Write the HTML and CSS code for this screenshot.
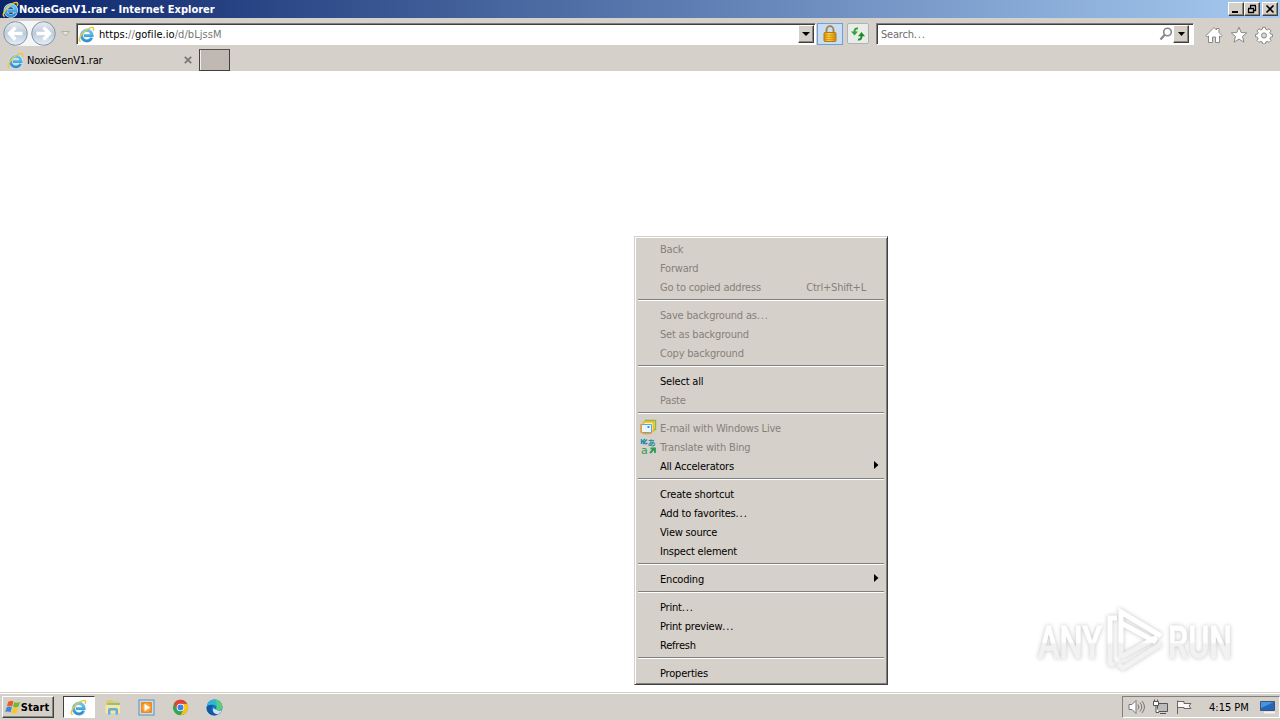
FILE: index.html
```
<!DOCTYPE html>
<html lang="en">
<head>
    <meta charset="UTF-8">
    <meta name="viewport" content="width=device-width, initial-scale=1.0">
    <title>NoxieGenV1.rar - Internet Explorer</title>
    <link rel="stylesheet" href="styles.css">
</head>
<body>
    <svg class="defs" width="0" height="0">
        <defs>
            <linearGradient id="ieBlue" x1="0" y1="0" x2="0" y2="1">
                <stop offset="0" stop-color="#64c5ef"/>
                <stop offset="1" stop-color="#2d8fd0"/>
            </linearGradient>
            <linearGradient id="silver" x1="0" y1="0" x2="0" y2="1">
                <stop offset="0" stop-color="#e9edf2"/>
                <stop offset=".5" stop-color="#bccbdc"/>
                <stop offset="1" stop-color="#e6f0fa"/>
            </linearGradient>
            <linearGradient id="gold" x1="0" y1="0" x2="1" y2="0">
                <stop offset="0" stop-color="#d98e08"/>
                <stop offset=".4" stop-color="#ffd543"/>
                <stop offset="1" stop-color="#d28a0c"/>
            </linearGradient>
            <linearGradient id="wmFade" gradientUnits="userSpaceOnUse" x1="0" y1="0" x2="0" y2="70">
                <stop offset=".5" stop-color="#fff"/>
                <stop offset=".53" stop-color="#f1f1f1"/>
                <stop offset="1" stop-color="#f3f3f3"/>
            </linearGradient>
        </defs>
        <symbol id="ie" viewBox="0 0 16 16">
            <path d="M12.900 11A5 5 0 1 1 13.300 9H5.500" fill="none" stroke="#d9effb" stroke-width="3.600"/>
            <path d="M12.900 11A5 5 0 1 1 13.300 9H5.500" fill="none" stroke="url(#ieBlue)" stroke-width="2.600"/>
            <path d="M2.600 14.500C0 14.600 1.300 9.800 5.200 5.800 9.200 1.900 14.300 0 14.700 2.600c.1.800-.1 1.400-.5 2" fill="none" stroke="#efc63c" stroke-width="1.400"/>
        </symbol>
    </svg>

    <div class="titlebar">
        <svg class="ie-icon" width="17" height="17"><use href="#ie"/></svg>
        <span class="title">NoxieGenV1.rar - Internet Explorer</span>
        <div class="win-buttons">
            <button class="win-btn"><svg width="12" height="10"><path d="M2 8h6" stroke="#000" stroke-width="2"/></svg></button>
            <button class="win-btn"><svg width="12" height="10"><path d="M4 1.500h6M4.500 2v2M9.500 2v4.500H8M2 4.500h6M2.500 5v3.500h5V5" fill="none" stroke="#000" stroke-width="1.300"/></svg></button>
            <button class="win-btn close"><svg width="12" height="10"><path d="M2.500 1.500l7 7M9.500 1.500l-7 7" stroke="#000" stroke-width="1.600"/></svg></button>
        </div>
    </div>

    <div class="navbar">
        <svg class="history" width="74" height="30" viewBox="0 0 74 30">
            <path d="M15 3h28a13 13 0 0 1 0 25H15z" fill="#f5f6f7"/>
            <g fill="url(#silver)" stroke="#8794a3">
                <circle cx="15.500" cy="15.500" r="11.800"/>
                <circle cx="43.500" cy="15.500" r="11.800"/>
            </g>
            <g fill="none" stroke="#fff" stroke-width="3.400">
                <path d="M22.500 15.500H10M15.500 9.500l-6 6 6 6"/>
                <path d="M36.500 15.500h12M43.500 9.500l6 6-6 6"/>
            </g>
            <path d="M61.500 13.500h8l-4 4.500z" fill="#e5e1dc" stroke="#b3aea7"/>
        </svg>
        <div class="field address">
            <svg class="ie-icon" width="17" height="17"><use href="#ie"/></svg>
            <span class="url">https:<i>//</i>gofile.io<i>/d/bLjssM</i></span>
            <button class="drop"><svg width="8" height="4"><path d="M0 0h8L4 4z"/></svg></button>
        </div>
        <button class="lock">
            <svg width="16" height="18" viewBox="0 0 16 18">
                <path d="M4.500 8V5a3.500 3.800 0 0 1 7 0v3" fill="none" stroke="#a48338" stroke-width="1.800"/>
                <rect x="2" y="7.500" width="12" height="9" rx="1" fill="url(#gold)" stroke="#b87a0d"/>
                <path d="M2.500 10h11M2.500 12.300h11M2.500 14.600h11" stroke="#c5860c" stroke-width=".7"/>
            </svg>
        </button>
        <button class="reload">
            <svg width="16" height="16" viewBox="0 0 16 16">
                <path d="M8 2.500C5.500 2 4.500 3.500 4.500 6" fill="none" stroke="#31a535" stroke-width="2"/>
                <path d="M1 5.500h7L4.500 9.500z" fill="#31a535"/>
                <path d="M8 13.500c2.500.5 3.500-1 3.500-3.500" fill="none" stroke="#21882a" stroke-width="2"/>
                <path d="M8 10.200h7L11.500 6z" fill="#21882a"/>
            </svg>
        </button>
        <div class="field search">
            <span class="placeholder">Search<b class="dots">...</b></span>
            <svg width="14" height="14" viewBox="0 0 14 14"><circle cx="8.500" cy="5" r="3.800" fill="none" stroke="#85878b" stroke-width="1.600"/><path d="M5.500 8L1.500 12.500" stroke="#85878b" stroke-width="2.200"/></svg>
            <button class="drop"><svg width="7" height="4"><path d="M0 0h7L3.500 4z"/></svg></button>
        </div>
        <div class="tools">
            <svg width="18" height="18" viewBox="0 0 18 18"><path d="M1 9.500L9 1.500l2.500 2.500V2.500h2.500V6.500l3 3-1.200 1.500-1.300-1V16.500h-4V11h-3v5.500h-4V10l-1.300 1z" fill="#fff" stroke="#898989"/></svg>
            <svg width="18" height="18" viewBox="0 0 18 18"><path d="M9 1.200l2.200 5.300 5.600.3-4.300 3.700 1.500 5.700L9 13.100l-5 3.100 1.500-5.700L1.200 6.800l5.600-.3z" fill="#fff" stroke="#898989"/></svg>
            <svg width="18" height="18" viewBox="0 0 18 18"><path d="M7.600 1.300h2.800l.4 2 1.500.6 1.700-1.100 2 2-1.100 1.700.6 1.500 2 .4v2.400l-2 .4-.6 1.500 1.100 1.700-2 2-1.700-1.100-1.500.6-.4 2H7.600l-.4-2-1.500-.6L4 16.400l-2-2 1.100-1.700-.6-1.500-2-.4V8.400l2-.4.6-1.500L2 4.800l2-2 1.700 1.100 1.500-.6z" fill="#fff" stroke="#898989"/><circle cx="9" cy="9.500" r="2.600" fill="#d8d4cf" stroke="#898989"/></svg>
        </div>
    </div>

    <div class="tabs">
        <div class="tab active">
            <svg class="ie-icon" width="17" height="17"><use href="#ie"/></svg>
            <span class="tab-name">NoxieGenV1.rar</span>
            <svg class="tab-close" width="8" height="8"><path d="M.8.8l6.400 6.400M7.200.8L.8 7.200" stroke="#7c7873" stroke-width="1.800"/></svg>
        </div>
        <button class="new-tab"></button>
    </div>

    <div class="page"></div>

    <div class="taskbar">
        <button class="start">
            <svg width="16" height="16" viewBox="0 0 17 16">
                <path d="M3.500 2.500q3-2 5.500-.3L7.600 7.500Q5 5.800 2 7.300z" fill="#ed5a24"/>
                <path d="M10 2.600q2.800 1.600 6-.2L14.500 7.600q-3 1.600-6 .2z" fill="#76b82f"/>
                <path d="M1.800 8.200q3-1.500 5.500.2L5.800 13.800Q3.500 12 .3 13.400z" fill="#3c88d8"/>
                <path d="M8.200 8.800q3 1.500 6-.1l-1.500 5.400q-3 1.600-6 .1z" fill="#fbc52c"/>
            </svg>
            <span>Start</span>
        </button>
        <div class="task active"><svg width="17" height="17"><use href="#ie"/></svg></div>
        <div class="task">
            <svg width="18" height="18" viewBox="0 0 18 18">
                <path d="M2 3.500L4 2h4l1 1.500h6V15H2z" fill="#e9c75f"/>
                <path d="M3.500 5h12.500v3H3.500z" fill="#7fc69c"/>
                <path d="M1.500 7h14.500v8.500H1.500z" fill="#f8e6a0"/>
                <path d="M4 16.500V12q0-2 2-2h6q2 0 2 2v4.500h-2.500V12.500h-5v4z" fill="#67add9"/>
            </svg>
        </div>
        <div class="task">
            <svg width="17" height="17" viewBox="0 0 17 17">
                <rect x="1" y="1" width="15" height="15" fill="#c6dff1" stroke="#5792c0"/>
                <rect x="3" y="3" width="11" height="11" rx="1" fill="#f38a16"/>
                <circle cx="8.500" cy="8.500" r="4.500" fill="#f8a644"/>
                <path d="M6.500 4.800v7.400l5.500-3.700z" fill="#fff"/>
            </svg>
        </div>
        <div class="task">
            <svg width="17" height="17" viewBox="0 0 16 16">
                <circle cx="8" cy="8" r="7.200" fill="#35a553"/>
                <path d="M8 15.200A7.200 7.200 0 0 0 14.240 4.400H8l3.100 5.400z" fill="#fbc116"/>
                <path d="M1.760 4.400A7.200 7.200 0 0 1 14.240 4.400H8L4.900 9.800z" fill="#e34133"/>
                <circle cx="8" cy="8" r="3.600" fill="#fff"/>
                <circle cx="8" cy="8" r="2.800" fill="#3f7fe8"/>
            </svg>
        </div>
        <div class="task">
            <svg width="17" height="17" viewBox="0 0 16 16">
                <circle cx="8" cy="8" r="7.500" fill="#1478c8"/>
                <path d="M.6 7.500C1.500-1.500 15-2 15.500 7.500c0 3-3.500 4-6 2.500 1-1.500.5-4-2-4.500-3-.6-6 .2-6.900 2z" fill="#35b5d5"/>
                <path d="M9 .6c4 .4 6.500 3.500 6.500 6.900 0 3-3.500 4-6 2.500 1.500-3 .5-6.500-.5-9.400z" fill="#5bcd76"/>
                <path d="M9.500 10c2 1.500 4.500 1 5.500 0-.6 2.500-2.600 4-4.500 4.500-3-.5-4.700-3-3.600-6z" fill="#d5e2ea"/>
                <path d="M5.500 8c-1 4 2 6.500 5.500 6.500-6 3-11-2-10.400-6.500 1-2.500 4-3 6-2-.5.4-.9 1-1.100 2z" fill="#1557a5"/>
            </svg>
        </div>
        <div class="tray">
            <svg width="18" height="16" viewBox="0 0 18 16"><path d="M1 5.500h3L8 1.500v13L4 10.500H1z" fill="#fff" stroke="#777"/><path d="M10 5.500q1.800 2.500 0 5M12 3.500q3.500 4.500 0 9M14 2q5 6 0 12" fill="none" stroke="#777"/></svg>
            <svg width="18" height="16" viewBox="0 0 18 16"><path d="M5.500 4.500h10v8h-10zM8 14.500h6" fill="#bbb" stroke="#555"/><path d="M1.500 2.500h5v4h-5zM2.500.5v2M5.500.5v2M4 7v6.500h3" fill="#fff" stroke="#555"/></svg>
            <svg width="17" height="16" viewBox="0 0 17 16"><path d="M1.500 15V1.500M2 2.500h6v2h7l-2 2.500 2 2.500H8v-1H2" fill="#f7f7f7" stroke="#666"/></svg>
            <span class="clock">4:15 PM</span>
            <svg class="show-desktop" width="16" height="14" viewBox="0 0 16 14"><path d="M.5 1.500h14v9H.5z" fill="#2367bd" stroke="#3c5573"/><path d="M1 2h13L1 8z" fill="#4b93dc"/><path d="M4 12.500h11" stroke="#f3f3f3" stroke-width="2"/></svg>
        </div>
    </div>

    <svg class="watermark" width="216" height="72" viewBox="0 0 216 72">
        <g class="wm-text">
            <text x="8" y="51" textLength="64" lengthAdjust="spacingAndGlyphs">ANY</text>
            <text x="138" y="51" textLength="64" lengthAdjust="spacingAndGlyphs">RUN</text>
        </g>
        <g class="wm-logo">
            <path d="M87 11h-7v45l4 3"/>
            <path d="M91 51V5l40 24"/>
            <path d="M91 16l35 19"/>
            <path d="M131 37L93 61l-5-4"/>
            <path d="M91 50l36-20"/>
        </g>
    </svg>

    <div class="context-menu">
        <div class="item disabled">Back</div>
        <div class="item disabled">Forward</div>
        <div class="item disabled">Go to copied address<span class="shortcut">Ctrl+Shift+L</span></div>
        <hr>
        <div class="item disabled">Save background as<b class="dots">...</b></div>
        <div class="item disabled">Set as background</div>
        <div class="item disabled">Copy background</div>
        <hr>
        <div class="item">Select all</div>
        <div class="item disabled">Paste</div>
        <hr>
        <div class="item disabled">
            <svg class="item-icon" width="17" height="17" viewBox="0 0 17 17"><path d="M5.500 1.500h10v9h-10z" fill="#d7e590" stroke="#8eb73d" stroke-width="1.400"/><path d="M3.500 3h10v9h-10z" fill="#fff2ad" stroke="#edb82e" stroke-width="1.600"/><path d="M1.500 5.500h10v8h-10z" fill="#e9f6ff" stroke="#58a9e2"/><path d="M1 5v8q3 3 11 1" fill="none" stroke="#f49b31" stroke-width="1.600"/><path d="M7.500 7h2v2h-2z" fill="#4789ca"/></svg>
            E-mail with Windows Live
        </div>
        <div class="item disabled">
            <svg class="item-icon" width="17" height="19" viewBox="0 0 17 19"><path d="M1.500 2v5M2 5l3-3M7 2.500L3.500 6M3.500 3v3.500h4" fill="none" stroke="#288cad" stroke-width="1.300"/><text class="kana" x="7.500" y="9">あ</text><text class="latin" x="1" y="17">a</text><path d="M10 16l4-4M10.500 11.500H15V16" fill="none" stroke="#2c9c50" stroke-width="1.800"/></svg>
            Translate with Bing
        </div>
        <div class="item">All Accelerators<svg class="arrow" width="5" height="8"><path d="M0 0l4.500 4L0 8z"/></svg></div>
        <hr>
        <div class="item">Create shortcut</div>
        <div class="item">Add to favorites<b class="dots">...</b></div>
        <div class="item">View source</div>
        <div class="item">Inspect element</div>
        <hr>
        <div class="item">Encoding<svg class="arrow" width="5" height="8"><path d="M0 0l4.500 4L0 8z"/></svg></div>
        <hr>
        <div class="item">Print<b class="dots">...</b></div>
        <div class="item">Print preview<b class="dots">...</b></div>
        <div class="item">Refresh</div>
        <hr>
        <div class="item">Properties</div>
    </div>
</body>
</html>
```
FILE: styles.css
```
* {
    box-sizing: border-box;
}
body {
    font-family: "DejaVu Sans Condensed", "DejaVu Sans", sans-serif;
    font-stretch: condensed;
    font-size: 11px;
    letter-spacing: -0.2px;
    color: #000;
    background-color: #fff;
    margin: 0;
    height: 720px;
    display: flex;
    flex-direction: column;
    overflow: hidden;
}
svg {
    display: block;
    flex: none;
}
.defs {
    position: absolute;
}
button {
    display: flex;
    align-items: center;
    justify-content: center;
    flex: none;
    padding: 0;
    font: inherit;
    letter-spacing: inherit;
    background-color: #d4d0c8;
    border: 1px solid;
    border-color: #fff #404040 #404040 #fff;
    box-shadow: inset -1px -1px #8a8680;
}
.titlebar {
    display: flex;
    align-items: center;
    flex: none;
    height: 18px;
    padding: 0 2px;
    color: #fff;
    background: linear-gradient(to right, #0a246a, #a6caf0);
}
.title {
    font-weight: bold;
    letter-spacing: 0.02px;
    flex: 1;
}
.win-buttons {
    display: flex;
}
.win-btn {
    width: 16px;
    height: 14px;
}
.win-btn.close {
    margin-left: 2px;
}
.navbar {
    display: flex;
    flex: none;
    height: 31px;
    background-color: #d6d0ca;
}
.history {
    margin-right: 2px;
}
.field {
    display: flex;
    align-items: center;
    height: 22px;
    margin-top: 5px;
    background-color: #fff;
    border: 1px solid;
    border-color: #808080 #fff #fff #808080;
    box-shadow: inset 1px 1px #404040;
}
.address {
    width: 740px;
    padding: 0 1px;
}
.url {
    flex: 1;
    margin-left: 4px;
    letter-spacing: 0.05px;
}
.url i {
    font-style: normal;
    color: #777;
}
.drop {
    width: 16px;
    height: 18px;
}
.lock {
    width: 26px;
    height: 22px;
    margin: 5px 0 0 1px;
    background-color: #c9def5;
    border-color: #70a0dc;
    box-shadow: none;
}
.reload {
    width: 22px;
    height: 21px;
    margin: 5px 7px 0 4px;
    background-color: #e9edea;
    border-color: #aeb3b8;
    border-radius: 2px;
    box-shadow: none;
}
.search {
    width: 318px;
    padding: 0 4px;
}
.placeholder {
    flex: 1;
    color: #6d6d6d;
}
.dots {
    font-weight: normal;
    letter-spacing: 0.9px;
}
.tools {
    display: flex;
    gap: 7px;
    margin: 8px 0 0 11px;
}
.tabs {
    display: flex;
    flex: none;
    height: 22px;
    background-color: #d6d0ca;
}
.tab {
    display: flex;
    align-items: center;
    width: 199px;
    padding: 0 7px;
}
.tab-name {
    flex: 1;
    margin-left: 3px;
}
.new-tab {
    width: 31px;
    height: 22px;
    background-color: #c0b8b2;
    border-color: #55514d #404040 #404040;
    box-shadow: inset 1px 0 #eee;
}
.page {
    flex: 1;
}
.taskbar {
    display: flex;
    flex: none;
    height: 28px;
    padding: 3px 2px;
    background-color: #d6d0ca;
    border-top: 1px solid #d6d0ca;
    box-shadow: inset 0 1px #fff;
}
.start {
    width: 52px;
    height: 22px;
    margin-right: 9px;
    padding-right: 2px;
    font-weight: bold;
    letter-spacing: 0.1px;
}
.task {
    display: flex;
    align-items: center;
    justify-content: center;
    width: 32px;
    height: 22px;
    margin-right: 2px;
    padding-right: 1px;
}
.task.active {
    background-color: #fff;
    border: 1px solid;
    border-color: #404040 #fff #fff #404040;
}
.tray {
    display: flex;
    align-items: center;
    gap: 6px;
    width: 158px;
    height: 22px;
    margin: 0 -2px 0 auto;
    padding-left: 5px;
    border: 1px solid;
    border-color: #808080 #fff #fff #808080;
}
.clock {
    width: 46px;
    margin-left: 10px;
    letter-spacing: 0;
    white-space: nowrap;
}
.show-desktop {
    margin-left: -1px;
}
.watermark {
    position: absolute;
    left: 1030px;
    top: 607px;
    filter: drop-shadow(0 0 2px rgba(0, 0, 0, 0.24));
}
.wm-text {
    font: 500 44px Roboto, sans-serif;
    letter-spacing: 0;
    fill: url(#wmFade);
    stroke: url(#wmFade);
    stroke-width: 0.8;
}
.wm-logo {
    fill: none;
    stroke: url(#wmFade);
    stroke-width: 5;
}
.context-menu {
    position: absolute;
    left: 634px;
    top: 236px;
    width: 254px;
    height: 449px;
    padding: 3px 2px 1px;
    background-color: #d6d0ca;
    border: 1px solid;
    border-color: #d6d0ca #404040 #404040 #d6d0ca;
    box-shadow: inset 1px 1px #fff, inset -1px -1px #808080;
}
.item {
    display: flex;
    align-items: center;
    height: 19px;
    padding: 0 18px 0 23px;
    white-space: nowrap;
}
.item.disabled {
    color: #85817c;
}
.shortcut {
    margin-left: auto;
    margin-right: 1px;
}
.item-icon {
    margin: -2px 3px 0 -20px;
}
.arrow {
    margin: -3px -12px 0 auto;
}
.kana {
    font: bold 8px "Noto Sans CJK JP", sans-serif;
    fill: #258f9f;
}
.latin {
    font: 11px "DejaVu Sans", sans-serif;
    fill: #2c9c50;
}
hr {
    height: 2px;
    margin: 2px 1px 5px;
    border: 0;
    border-top: 1px solid #808080;
    border-bottom: 1px solid #fff;
}
```
